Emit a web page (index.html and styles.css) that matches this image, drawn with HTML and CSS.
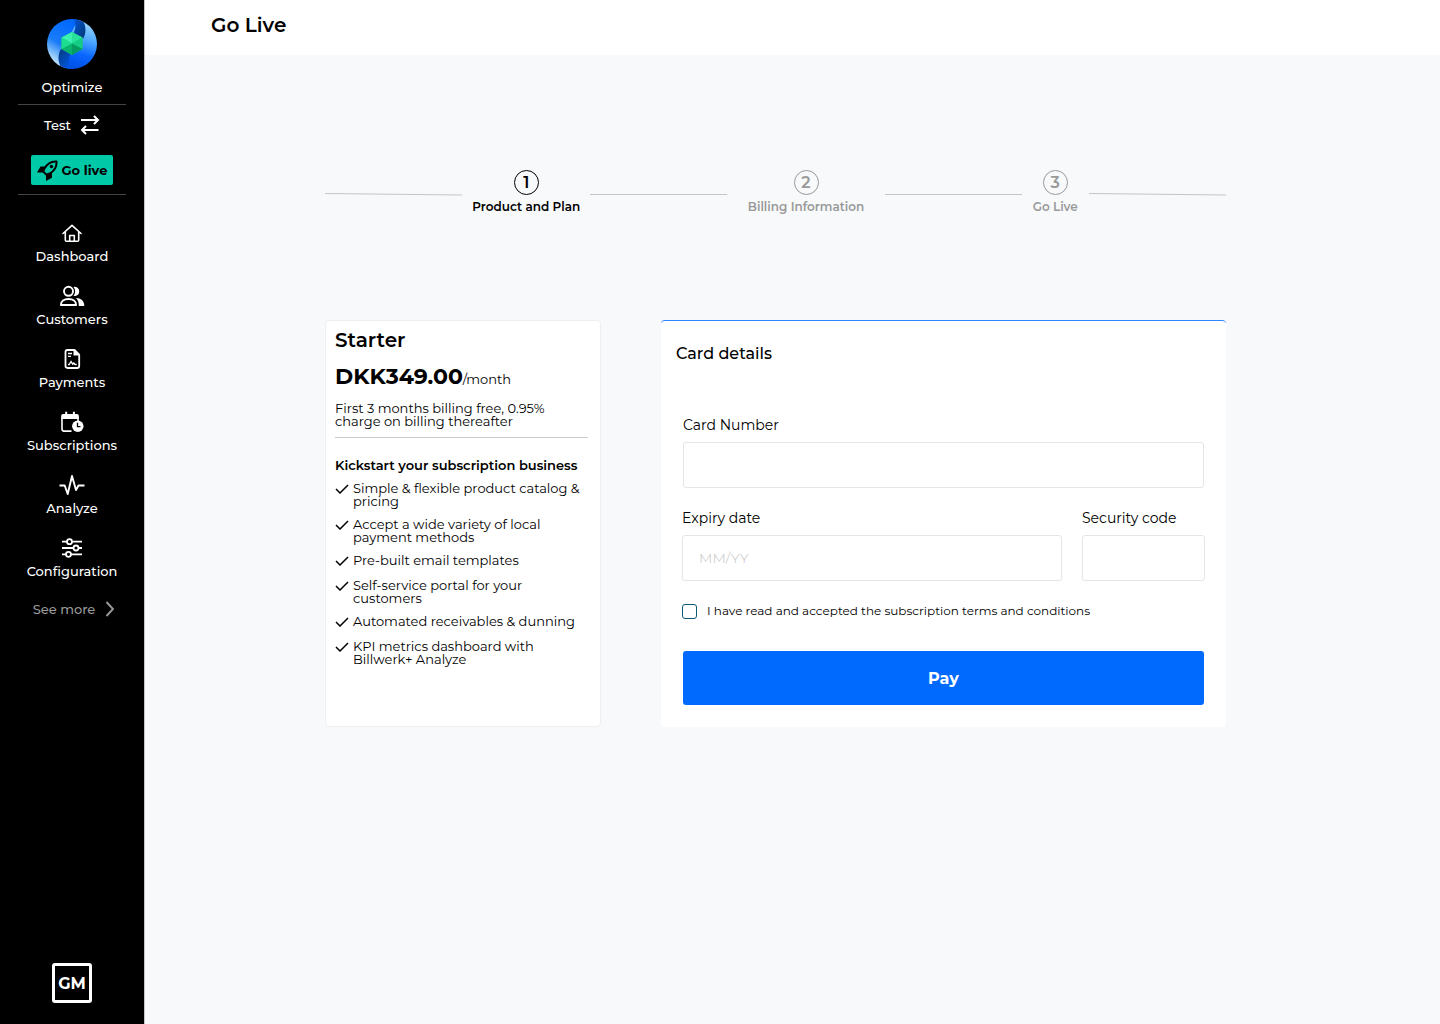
FILE: index.html
```html
<!DOCTYPE html>
<html lang="en">
<head>
<meta charset="utf-8">
<meta name="viewport" content="width=device-width, initial-scale=1">
<title>Go Live</title>
<link rel="stylesheet" href="styles.css">
</head>
<body>
<div class="app">
  <aside class="sidebar">
    <div class="brand">
      <svg class="brand-logo" viewBox="0 0 50 50" aria-hidden="true">
        <defs>
          <linearGradient id="swirl-left" x1="0.6" y1="0" x2="0.2" y2="1"><stop offset="0" stop-color="#0068ff"/><stop offset="0.5" stop-color="#1a7cf8"/><stop offset="0.75" stop-color="#8cc6fb"/><stop offset="1" stop-color="#f0faff"/></linearGradient>
          <linearGradient id="swirl-right" x1="0.6" y1="0" x2="0.4" y2="1"><stop offset="0" stop-color="#a4dcff"/><stop offset="0.4" stop-color="#4ba6ff"/><stop offset="0.7" stop-color="#0a66ff"/><stop offset="1" stop-color="#0050e6"/></linearGradient>
          <linearGradient id="fold-top" x1="0" y1="0" x2="1" y2="0.8"><stop offset="0" stop-color="#0056dc"/><stop offset="1" stop-color="#033a78"/></linearGradient>
          <linearGradient id="fold-bottom" x1="0" y1="0" x2="0.8" y2="1"><stop offset="0" stop-color="#033a78"/><stop offset="1" stop-color="#0056e6"/></linearGradient>
          <clipPath id="disc"><circle cx="25" cy="25" r="25"/></clipPath>
        </defs>
        <g clip-path="url(#disc)">
          <path fill="url(#swirl-left)" d="M0 0h32v25L18 50H0z"/>
          <path fill="url(#swirl-right)" d="M50 50H18V25L32 0h18z"/>
          <path fill="#1a7cf8" d="M18 20h14v10H18z"/>
          <path fill="url(#fold-top)" d="M26 0c3 3 3 8 1 13v4l9 3c3-5 4-12-1-20z"/>
          <path fill="url(#fold-bottom)" d="M24 50c-3-3-3-8-1-13v-4l-9-3c-3 5-4 12 1 20z"/>
        </g>
        <path fill="#10c47b" d="M25 13l10.500 5.500v11.500L25 36l-10.500-6V18.500z"/>
        <path fill="#3cf0b0" d="M25 13v11.500l-10.500-6z"/>
        <path fill="#28e29c" d="M25 13l10.500 5.500-10.500 6z"/>
        <path fill="#14cd84" d="M35.500 18.500v11.500L25 24.500z"/>
        <path fill="#049c60" d="M25 24.500l10.500 5.500L25 36z"/>
        <path fill="#08b46e" d="M25 24.500V36l-10.500-6z"/>
        <path fill="#1cdc90" d="M14.500 18.500l10.500 6-10.500 5.500z"/>
      </svg>
      <span>Optimize</span>
    </div>
    <div class="mode">
      <button class="mode-switch" type="button">Test
        <svg width="20" height="20" viewBox="0 0 20 20" fill="none" stroke="currentColor" stroke-width="2" aria-hidden="true"><path d="M1 5h17M14 1l4 4-4 4M18.500 15H2M6 11l-4 4 4 4"/></svg>
      </button>
      <button class="go-live" type="button">
        <svg width="21" height="21" viewBox="0 0 21 21" aria-hidden="true"><path fill="none" stroke="#000" stroke-width="2" stroke-linejoin="round" d="M19.500 1.500C13.500 1 10 4 7.500 8.500L6.300 11.600l3.200 3.200 3.200-1.300C17 11 20 7.500 19.500 1.500z"/><path d="M8.500 6.500H3.500L0 12.500h5.800zM15 13v4.700L9 21v-6z"/><circle cx="14.500" cy="6.500" r="1.700"/></svg>
        <span>Go live</span>
      </button>
    </div>
    <nav class="nav">
      <a href="#"><svg width="24" height="24" viewBox="0 0 24 24" fill="none" stroke="currentColor" stroke-width="1.600" stroke-linejoin="round" stroke-linecap="round" aria-hidden="true"><path d="M3 12.500l9-8.200 9 8.200M5.300 11V19c0 .8.500 1.300 1.300 1.300h10.800c.8 0 1.300-.5 1.300-1.300V11M9.700 20v-5.500h4.600V20"/></svg>Dashboard</a>
      <a href="#"><svg width="26" height="24" viewBox="0 0 26 24" aria-hidden="true"><circle cx="9.500" cy="7.300" r="4.500" fill="none" stroke="currentColor" stroke-width="1.900"/><path d="M1.900 21c0-4 3.200-6 7.600-6s7.600 2 7.600 6z" fill="none" stroke="currentColor" stroke-width="1.900" stroke-linejoin="round"/><path fill="currentColor" d="M14.500 3a4.600 4.600 0 1 1 0 8.900c2.200-2.600 2.200-6.300 0-8.900zM17 14c5 .2 8.300 2.600 8.300 8h-5.500c.1-3.300-.7-6-2.800-8z"/></svg>Customers</a>
      <a href="#"><svg width="24" height="24" viewBox="0 0 24 24" aria-hidden="true"><path fill="none" stroke="currentColor" stroke-width="1.800" stroke-linejoin="round" d="M5.500 5c0-1.200.7-2 2-2h7l4.700 4.700V19c0 1.300-.7 2-2 2H7.500c-1.300 0-2-.7-2-2z"/><path fill="currentColor" d="M13.500 2.500l6 6h-6z"/><path fill="none" stroke="currentColor" stroke-width="1.300" d="M8 6.500h4M8 9.300h3M8 17.500h1.200l1.800-3 1.700 2.700 1.100-1.200 1.200 1.500h1.700"/></svg>Payments</a>
      <a href="#"><svg width="24" height="24" viewBox="0 0 24 24" aria-hidden="true"><path fill="none" stroke="currentColor" stroke-width="1.600" d="M11.500 21.100H4c-1.200 0-2-.8-2-2V8h16v3"/><path fill="currentColor" d="M1.200 9V6c0-1.200.8-2 2-2h2V1.800h2V4h5.700V1.800h2V4h2c1.200 0 2 .8 2 2v3z"/><circle cx="17.800" cy="16.200" r="5.700" fill="currentColor"/><path fill="none" stroke="#000" stroke-width="1.300" d="M17.500 12.800v3.800h3"/></svg>Subscriptions</a>
      <a href="#"><svg width="26" height="24" viewBox="0 0 26 24" fill="none" stroke="currentColor" stroke-width="1.900" stroke-linejoin="round" aria-hidden="true"><path d="M.5 12.500h5.200l3 8.500L13 3l4 14 2.500-4.500H25.500"/></svg>Analyze</a>
      <a href="#"><svg width="24" height="24" viewBox="0 0 24 24" fill="none" stroke="currentColor" stroke-width="1.800" aria-hidden="true"><path d="M2 5.700h5M12 5.700h10M2 12h11.500M18.500 12H22M2 18.300h4M11 18.300h11"/><circle cx="9.500" cy="5.700" r="2.500"/><circle cx="16" cy="12" r="2.500"/><circle cx="8.500" cy="18.300" r="2.500"/></svg>Configuration</a>
      <a class="see-more" href="#">See more <svg width="10" height="16" viewBox="0 0 10 16" fill="none" stroke="currentColor" stroke-width="1.900" aria-hidden="true"><path d="M1.500 1l6.500 7-6.500 7"/></svg></a>
    </nav>
    <button class="avatar" type="button">GM</button>
  </aside>

  <div class="page">
    <header class="topbar"><h1>Go Live</h1></header>
    <main class="content">
      <div class="stepper">
        <svg class="rail" aria-hidden="true"><line x1="0" y1="0.500" x2="100%" y2="2"/></svg>
        <div class="step current"><span class="dot">1</span><span>Product and Plan</span></div>
        <svg class="rail" aria-hidden="true"><line x1="0" y1="1.500" x2="100%" y2="1.500"/></svg>
        <div class="step"><span class="dot">2</span><span>Billing Information</span></div>
        <svg class="rail" aria-hidden="true"><line x1="0" y1="1.500" x2="100%" y2="1.500"/></svg>
        <div class="step"><span class="dot">3</span><span>Go Live</span></div>
        <svg class="rail" aria-hidden="true"><line x1="0" y1="0.500" x2="100%" y2="2"/></svg>
      </div>

      <div class="panels">
        <section class="plan">
          <h2>Starter</h2>
          <p class="price"><strong>DKK349.00</strong>/month</p>
          <p class="terms">First 3 months billing free, 0.95% charge on billing thereafter</p>
          <h3>Kickstart your subscription business</h3>
          <ul class="features">
            <li><svg class="tick" viewBox="0 0 14 10" aria-hidden="true"><path d="M1 5l4 4 8-8"/></svg>Simple &amp; flexible product catalog &amp; pricing</li>
            <li><svg class="tick" viewBox="0 0 14 10" aria-hidden="true"><path d="M1 5l4 4 8-8"/></svg>Accept a wide variety of local payment methods</li>
            <li><svg class="tick" viewBox="0 0 14 10" aria-hidden="true"><path d="M1 5l4 4 8-8"/></svg>Pre-built email templates</li>
            <li><svg class="tick" viewBox="0 0 14 10" aria-hidden="true"><path d="M1 5l4 4 8-8"/></svg>Self-service portal for your customers</li>
            <li><svg class="tick" viewBox="0 0 14 10" aria-hidden="true"><path d="M1 5l4 4 8-8"/></svg>Automated receivables &amp; dunning</li>
            <li><svg class="tick" viewBox="0 0 14 10" aria-hidden="true"><path d="M1 5l4 4 8-8"/></svg>KPI metrics dashboard with Billwerk+ Analyze</li>
          </ul>
        </section>

        <form class="payment">
          <h2>Card details</h2>
          <div class="fields">
            <div class="field">
              <label for="card-number">Card Number</label>
              <input id="card-number" type="text">
            </div>
            <div class="field-row">
              <div class="field">
                <label for="expiry">Expiry date</label>
                <input id="expiry" type="text" placeholder="MM/YY">
              </div>
              <div class="field">
                <label for="security">Security code</label>
                <input id="security" type="text">
              </div>
            </div>
            <label class="accept"><input type="checkbox"><span>I have read and accepted the subscription terms and conditions</span></label>
            <button class="pay" type="button">Pay</button>
          </div>
        </form>
      </div>
    </main>
  </div>
</div>
</body>
</html>
```
FILE: styles.css
```css
*, *::before, *::after { box-sizing: border-box; }

body {
  margin: 0;
  font-family: Montserrat, Inter, sans-serif;
  font-size: 13px;
  color: #000;
  background: #f8f9fb;
}

h1, h2, h3, p, ul { margin: 0; padding: 0; }
button, input { font: inherit; color: inherit; }
svg { display: block; flex: none; }

.app { display: flex; min-height: 100vh; }

/* Sidebar */
.sidebar {
  flex: none;
  width: 145px;
  display: flex;
  flex-direction: column;
  align-items: center;
  padding: 19px 0 21px;
  background: #000;
  border-right: 1px solid #c4c5c7;
  color: #fff;
  font-weight: 500;
}
.brand, .mode {
  width: 108px;
  display: flex;
  flex-direction: column;
  align-items: center;
  border-bottom: 1px solid #444;
}
.brand { gap: 9px; padding-bottom: 8px; line-height: 18px; }
.brand-logo { width: 50px; height: 50px; }
.mode { padding: 10px 0 9px; gap: 20px; }
.mode-switch {
  display: flex;
  align-items: center;
  gap: 9px;
  padding: 0;
  border: 0;
  background: none;
  line-height: 20px;
}
.go-live {
  display: flex;
  align-items: center;
  justify-content: center;
  gap: 4px;
  width: 82px;
  height: 30px;
  padding: 0;
  border: 0;
  border-radius: 2px;
  background: #00c9a7;
  color: #000;
  font-weight: 700;
}

.nav {
  display: flex;
  flex-direction: column;
  align-items: center;
  gap: 19px;
  padding-top: 26px;
}
.nav a {
  display: flex;
  flex-direction: column;
  align-items: center;
  gap: 2px;
  color: #fff;
  text-decoration: none;
  line-height: 18px;
}
.nav .see-more { flex-direction: row; gap: 10px; padding: 1px 0 0 4px; color: #999; }

.avatar {
  width: 40px;
  height: 40px;
  margin-top: auto;
  padding: 0;
  border: 3px solid #fff;
  border-radius: 3px;
  background: #000;
  font-size: 16px;
  font-weight: 700;
}

/* Page */
.page { flex: 1; min-width: 0; }
.topbar { height: 55px; padding: 13px 66px; background: #fff; }
.topbar h1 { font-size: 20px; line-height: 24px; font-weight: 600; }
.content { padding: 115px 214px 40px 180px; }

.stepper {
  display: grid;
  grid-template-columns: 1fr 128px 1fr 157px 1fr 67px 1fr;
}
.rail { width: 100%; height: 3px; margin-top: 23px; }
.rail line { stroke: #c4c5c7; stroke-width: 1; }
.step {
  display: flex;
  flex-direction: column;
  align-items: center;
  gap: 3px;
  font-size: 12px;
  line-height: 18px;
  font-weight: 600;
  white-space: nowrap;
  color: #999;
}
.step.current { color: #000; }
.dot {
  width: 25px;
  height: 25px;
  border: 1px solid currentColor;
  border-radius: 50%;
  font-size: 16px;
  line-height: 23px;
  text-align: center;
}

.panels {
  display: grid;
  grid-template-columns: 276px 1fr;
  gap: 60px;
  margin-top: 104px;
}
.plan, .payment { min-height: 407px; background: #fff; border-radius: 4px; }

/* Plan summary */
.plan { padding: 7px 12px 20px 9px; border: 1px solid #eeeff2; }
.plan h2 { font-size: 20px; line-height: 24px; font-weight: 600; }
.price { margin-top: 11px; line-height: 28px; }
.price strong { font-size: 22px; font-weight: 700; }
.terms { padding: 9px 0; line-height: 13px; border-bottom: 1px solid #ccc; }
.plan h3 { margin-top: 18px; font-size: 13px; line-height: 18px; font-weight: 600; white-space: nowrap; }
.features {
  display: flex;
  flex-direction: column;
  gap: 10px;
  margin-top: 8px;
  list-style: none;
  line-height: 13px;
}
.features li { display: flex; gap: 4px; min-height: 15px; }
.tick {
  width: 14px;
  height: 10px;
  margin-top: 2px;
  fill: none;
  stroke: #000;
  stroke-width: 1.5px;
}

/* Payment form */
.payment { padding: 23px 22px 22px; border-top: 1px solid #2f86ff; }
.payment h2 { margin-left: -7px; font-size: 16px; line-height: 20px; font-weight: 500; }
.fields { margin-top: 52px; }
.field { display: flex; flex-direction: column; gap: 8px; }
.field label { font-size: 14px; line-height: 18px; }
.field input {
  width: 100%;
  height: 46px;
  padding: 0 16px;
  border: 1px solid #e4e4ea;
  border-radius: 3px;
  background: #fff;
  font-size: 14px;
}
.field input::placeholder { color: #c4c4c4; font-weight: 300; opacity: 1; }
.field-row {
  display: grid;
  grid-template-columns: 1fr 123px;
  gap: 20px;
  margin: 21px -1px 0;
}
.accept {
  display: flex;
  align-items: center;
  gap: 10px;
  margin: 21px -1px 31px;
  font-size: 12px;
  line-height: 18px;
}
.accept input {
  appearance: none;
  width: 15px;
  height: 15px;
  margin: 0;
  border: 1px solid #0b5a73;
  border-radius: 3px;
  background: #fff;
}
.accept input:checked { background: #0b5a73; }
.pay {
  width: 100%;
  height: 54px;
  border: 0;
  border-radius: 3px;
  background: #006aff;
  color: #fff;
  font-size: 16px;
  font-weight: 700;
}
```
